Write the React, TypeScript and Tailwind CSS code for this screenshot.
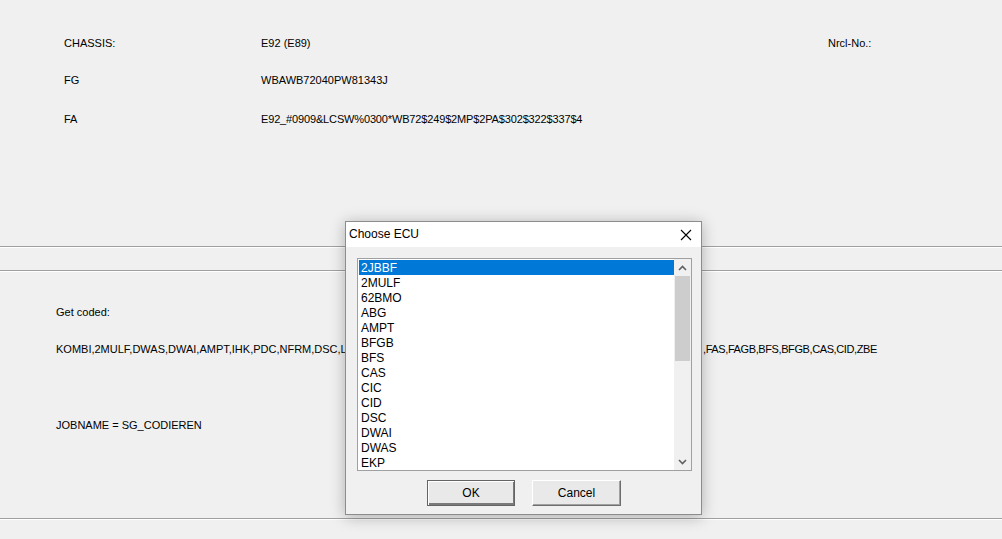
import React from 'react';

const ecus = [
  '2JBBF',
  '2MULF',
  '62BMO',
  'ABG',
  'AMPT',
  'BFGB',
  'BFS',
  'CAS',
  'CIC',
  'CID',
  'DSC',
  'DWAI',
  'DWAS',
  'EKP',
];

function Separator() {
  return <div className="h-[2px] border-t border-[#a0a0a0] border-b border-b-white" />;
}

function ChooseEcuDialog() {
  return (
    <div className="absolute left-[345px] top-[221px] w-[357px] h-[294px] border border-[#8c8c8c] bg-[#f0f0f0] shadow-[0_2px_14px_rgba(0,0,0,0.28)] flex flex-col">
      {/* title bar */}
      <div className="h-[25px] bg-white flex items-center justify-between pl-[3px] pr-[9px]">
        <span className="text-[12px] text-black">Choose ECU</span>
        <svg width="12" height="12" viewBox="0 0 12 12" className="text-black">
          <path d="M1 1 L11 11 M11 1 L1 11" stroke="currentColor" strokeWidth="1.1" />
        </svg>
      </div>

      <div className="flex-1 flex flex-col pl-[11px] pr-[9px] pt-[11px]">
        {/* list box */}
        <div className="h-[213px] bg-white border border-[#a0a0a0] flex text-[12px] leading-[15px] font-['Liberation_Sans',Arial,sans-serif]">
          <div className="flex-1 pl-[1px] pt-[1px]">
            {ecus.map((e, i) => (
              <div
                key={e}
                className={
                  i === 0
                    ? 'h-[15px] pl-[2px] pt-[1px] bg-[#0078d7] text-white'
                    : 'h-[15px] pl-[2px] pt-[1px] text-black'
                }
              >
                {e}
              </div>
            ))}
          </div>
          <div className="w-[17px] bg-[#f0f0f0] flex flex-col pt-[1px]">
            <div className="h-[16px] flex items-center justify-center">
              <svg width="9" height="6" viewBox="0 0 9 6">
                <path d="M1 5 L4.5 1.5 L8 5" stroke="#606060" strokeWidth="1.6" fill="none" />
              </svg>
            </div>
            <div className="h-[85px] mx-[1px] bg-[#cdcdcd]" />
            <div className="flex-1" />
            <div className="h-[16px] flex items-center justify-center">
              <svg width="9" height="6" viewBox="0 0 9 6">
                <path d="M1 1 L4.5 4.5 L8 1" stroke="#606060" strokeWidth="1.6" fill="none" />
              </svg>
            </div>
          </div>
        </div>

        {/* buttons */}
        <div className="flex pl-[70px] gap-[17px] mt-[9px]">
          <button className="w-[88px] h-[26px] pt-[1px] border border-[#646464] bg-[#e9e9e9] shadow-[inset_1px_1px_0_#ffffff,inset_-1px_-2px_0_#7a7a7a] text-[12px] text-black">
            OK
          </button>
          <button className="w-[89px] h-[26px] pt-[1px] bg-[#e9e9e9] border-t border-l border-white border-r border-b border-r-[#6e6e6e] border-b-[#6e6e6e] shadow-[inset_-1px_-1px_0_#a0a0a0] text-[12px] text-black">
            Cancel
          </button>
        </div>
      </div>
    </div>
  );
}

export default function App() {
  return (
    <div className="relative w-[1002px] h-[539px] overflow-hidden bg-[#f0f0f0] text-black text-[11px] leading-[13px] font-['Liberation_Sans',Arial,sans-serif]">
      {/* vehicle info */}
      <div className="h-[246px] pt-[37px] pl-[64px]">
        <div className="grid grid-cols-[197px_567px_auto] gap-y-[24px]">
          <span>CHASSIS:</span>
          <span>E92 (E89)</span>
          <span>Nrcl-No.:</span>
          <span>FG</span>
          <span>WBAWB72040PW81343J</span>
          <span />
          <span className="mt-[2px]">FA</span>
          <span className="mt-[2px] tracking-[-0.15px]">
            E92_#0909&amp;LCSW%0300*WB72$249$2MP$2PA$302$322$337$4
          </span>
          <span />
        </div>
      </div>

      <Separator />
      <div className="h-[22px]" />
      <Separator />

      {/* coding info */}
      <div className="h-[246px] pl-[56px] pt-[34px] flex flex-col">
        <span>Get coded:</span>
        <div className="mt-[24px] flex whitespace-nowrap">
          <span className="w-[289px] overflow-hidden">KOMBI,2MULF,DWAS,DWAI,AMPT,IHK,PDC,NFRM,DSC,LSZ</span>
          <span className="ml-[358px] tracking-[-0.4px]">,FAS,FAGB,BFS,BFGB,CAS,CID,ZBE</span>
        </div>
        <span className="mt-[63px]">JOBNAME = SG_CODIEREN</span>
      </div>

      <Separator />

      <ChooseEcuDialog />
    </div>
  );
}
